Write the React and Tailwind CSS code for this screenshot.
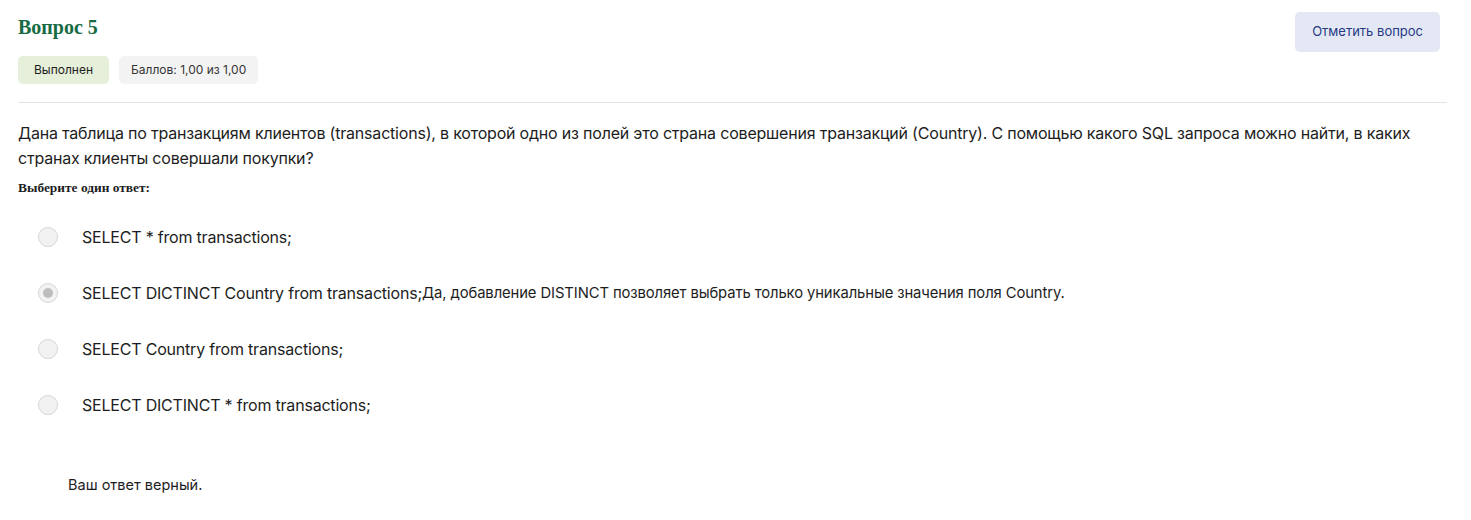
import React from "react";

const sans = { fontFamily: "Inter, 'Noto Sans', sans-serif" };
const serif = { fontFamily: "'Liberation Serif', 'DejaVu Serif', serif" };

function Radio({ checked }) {
  return (
    <span className="flex h-[20px] w-[20px] items-center justify-center rounded-full border border-[#d6d6d6] bg-[#f2f2f2]">
      {checked && <span className="h-[10px] w-[10px] rounded-full bg-[#bdbdbd]" />}
    </span>
  );
}

export default function App() {
  const options = [
    { text: "SELECT * from transactions;" },
    { text: "SELECT DICTINCT Country from transactions;", checked: true, fb: "Да, добавление DISTINCT позволяет выбрать только уникальные значения поля Country." },
    { text: "SELECT Country from transactions;" },
    { text: "SELECT DICTINCT * from transactions;" },
  ];
  return (
    <div className="min-h-[520px] bg-white px-[18px] pt-[12px] text-[#1d1d1d]" style={sans}>
      <div className="flex justify-between">
        <div>
          <div className="mt-[3px] text-[20px] font-bold leading-[24px] text-[#176b43]" style={serif}>
            Вопрос 5
          </div>
          <div className="mt-[17px] flex gap-[10px] text-[12px]">
            <span className="flex h-[28px] items-center rounded-[5px] bg-[#e6efd9] px-[16px]">Выполнен</span>
            <span className="flex h-[28px] items-center rounded-[5px] bg-[#f3f3f3] px-[12px] text-[#333]">Баллов: 1,00 из 1,00</span>
          </div>
        </div>
        <button className="mr-[13px] h-[40px] rounded-[5px] bg-[#e3e8f4] px-[17px] text-[13px] text-[#263a84]">
          Отметить вопрос
        </button>
      </div>
      <div className="mt-[18px] mr-[6px] h-px bg-[#e3e3e3]" />
      <p className="mt-[18px] text-[16px] leading-[25px] tracking-[-0.2px]">
        Дана таблица по транзакциям клиентов (transactions), в которой одно из полей это страна совершения транзакций (Country). С помощью какого SQL запроса можно найти, в каких странах клиенты совершали покупки?
      </p>
      <div className="mt-[9px] text-[13.4px] font-bold leading-[16px]" style={serif}>
        Выберите один ответ:
      </div>
      <div className="mt-[13px] flex flex-col">
        {options.map((o, i) => (
          <div key={i} className="flex h-[56px] items-center pl-[20px]">
            <Radio checked={o.checked} />
            <span className="ml-[24px] text-[16px] tracking-[-0.2px]">{o.text}</span>
            {o.fb && <span className="text-[14.8px] tracking-[-0.1px]">{o.fb}</span>}
          </div>
        ))}
      </div>
      <div className="mt-[41px] pl-[50px] text-[14.5px]">Ваш ответ верный.</div>
    </div>
  );
}
